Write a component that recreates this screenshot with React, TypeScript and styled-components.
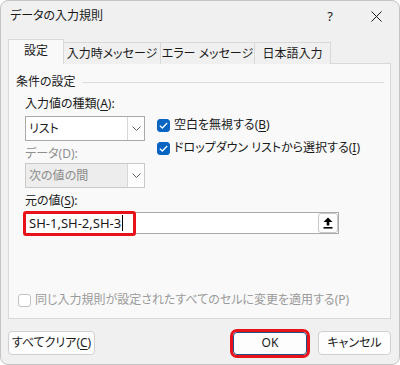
import React from "react";
import styled, { createGlobalStyle, css } from "styled-components";

const GlobalStyle = createGlobalStyle`
  html, body {
    margin: 0;
    background: #ffffff;
  }
  body {
    font-family: "Noto Sans", "Noto Sans CJK JP", sans-serif;
    font-size: 12px;
    color: #1a1a1a;
    font-feature-settings: "palt";
  }
`;

const Window = styled.div`
  width: 400px;
  height: 365px;
  box-sizing: border-box;
  border: 1px solid #c4c4c4;
  border-radius: 8px;
  background: #f0f0f0;
  overflow: hidden;
  display: flex;
  flex-direction: column;
`;

const TitleBar = styled.div`
  height: 30px;
  display: flex;
  align-items: center;
  padding-left: 9px;
  flex-shrink: 0;
`;

const Title = styled.div`
  flex: 1;
  font-size: 12px;
  line-height: 16px;
`;

const CaptionButton = styled.div`
  width: 46px;
  height: 30px;
  display: flex;
  align-items: center;
  justify-content: center;
  font-size: 13px;
  color: #1a1a1a;
`;

const Main = styled.div`
  padding: 8px 8px 0 7px;
  display: flex;
  flex-direction: column;
`;

const Tabs = styled.div`
  display: flex;
  align-items: flex-end;
  height: 25px;
  margin-bottom: -1px;
  position: relative;
  z-index: 1;
`;

const Tab = styled.div<{ $active?: boolean; $width: number }>`
  box-sizing: border-box;
  width: ${(p) => p.$width}px;
  height: 22px;
  margin-right: -1px;
  border: 1px solid #d9d9d9;
  border-bottom: none;
  background: #f0f0f0;
  display: flex;
  align-items: center;
  justify-content: center;
  line-height: 16px;
  white-space: nowrap;
  ${(p) =>
    p.$active &&
    css`
      height: 25px;
      background: #f9f9f9;
      padding-bottom: 2px;
    `}
`;

const Panel = styled.div`
  box-sizing: border-box;
  height: 256px;
  border: 1px solid #d9d9d9;
  background: #f9f9f9;
  padding: 10px 6px 0 7px;
  display: flex;
  flex-direction: column;
`;

const GroupHeader = styled.div`
  display: flex;
  align-items: center;
  gap: 6px;
  line-height: 16px;

  &::after {
    content: "";
    flex: 1;
    height: 1px;
    background: #dcdcdc;
    margin-top: 1px;
  }
`;

const GroupBody = styled.div`
  padding-left: 9px;
  display: flex;
  flex-direction: column;
`;

const FieldLabel = styled.div<{ $disabled?: boolean; $gap?: number }>`
  line-height: 16px;
  margin-top: ${(p) => p.$gap ?? 5}px;
  color: ${(p) => (p.$disabled ? "#8f8f8f" : "#1a1a1a")};
`;

const Row = styled.div`
  display: flex;
  margin-top: 4px;
`;

const LeftCol = styled.div`
  width: 120px;
  display: flex;
  flex-direction: column;
`;

const Options = styled.div`
  margin-left: 12px;
  display: flex;
  flex-direction: column;
  gap: 5px;
`;

const Select = styled.div<{ $disabled?: boolean; $gap?: number }>`
  box-sizing: border-box;
  height: 25px;
  margin-top: ${(p) => p.$gap ?? 0}px;
  border: 1px solid ${(p) => (p.$disabled ? "#c9c9c9" : "#a9a9a9")};
  background: ${(p) => (p.$disabled ? "#ededed" : "#ffffff")};
  color: ${(p) => (p.$disabled ? "#8c8c8c" : "#1a1a1a")};
  display: flex;
  align-items: center;
`;

const SelectValue = styled.div`
  flex: 1;
  padding-left: 3px;
  line-height: 16px;
`;

const SelectArrow = styled.div`
  box-sizing: border-box;
  width: 17px;
  height: 23px;
  border-left: 1px solid #d6d6d6;
  background: #fdfdfd;
  display: flex;
  align-items: center;
  justify-content: center;
`;

const CheckRow = styled.label<{ $disabled?: boolean }>`
  display: flex;
  align-items: center;
  gap: 4px;
  height: 18px;
  line-height: 16px;
  white-space: nowrap;
  color: ${(p) => (p.$disabled ? "#9a9a9a" : "#1a1a1a")};
`;

const Box = styled.span<{ $checked?: boolean }>`
  box-sizing: border-box;
  width: 13px;
  height: 13px;
  border-radius: 3px;
  display: inline-flex;
  align-items: center;
  justify-content: center;
  background: ${(p) => (p.$checked ? "#0a64c2" : "#ffffff")};
  border: 1px solid ${(p) => (p.$checked ? "#0a64c2" : "#c2c2c2")};
`;

const Key = styled.span`
  text-decoration: underline;
  text-underline-offset: 2px;
`;

const SourceField = styled.div`
  position: relative;
  box-sizing: border-box;
  width: 314px;
  height: 22px;
  margin-top: 3px;
  border: 1px solid #a9a9a9;
  background: #ffffff;
  display: flex;
  align-items: center;
`;

const SourceText = styled.div`
  flex: 1;
  padding-left: 3px;
  font-size: 13px;
  line-height: 16px;
  display: flex;
  align-items: center;
`;

const Caret = styled.span`
  display: inline-block;
  width: 1px;
  height: 16px;
  background: #000;
  margin-left: 1px;
`;

const Highlight = styled.div`
  position: absolute;
  left: -3px;
  top: -2px;
  width: 113px;
  height: 25px;
  box-sizing: border-box;
  border: 3px solid #e8121a;
  border-radius: 3px;
  pointer-events: none;
`;

const CollapseButton = styled.div`
  box-sizing: border-box;
  width: 20px;
  height: 20px;
  border: 1px solid #c8c8c8;
  border-radius: 3px;
  background: #fdfdfd;
  display: flex;
  align-items: center;
  justify-content: center;
`;

const Spacer = styled.div`
  flex: 1;
`;

const BottomCheck = styled.div`
  margin-left: 2px;
  margin-bottom: 9px;
`;

const Footer = styled.div`
  margin-top: 12px;
  display: flex;
  align-items: center;
`;

const Button = styled.div<{ $width: number; $primary?: boolean }>`
  box-sizing: border-box;
  width: ${(p) => p.$width}px;
  height: 24px;
  border: 1px solid #d0d0d0;
  border-radius: 4px;
  background: #fdfdfd;
  display: flex;
  align-items: center;
  justify-content: center;
  line-height: 16px;
  white-space: nowrap;
  ${(p) =>
    p.$primary &&
    css`
      height: 23px;
      border-color: #1f4f86;
      outline: 3px solid #e8121a;
      outline-offset: 0;
      margin-left: auto;
      margin-right: 11px;
    `}
`;

const Chevron = () => (
  <svg width="9" height="5" viewBox="0 0 9 5">
    <polyline points="0.5,0.5 4.5,4.5 8.5,0.5" fill="none" stroke="#5c5c5c" strokeWidth="1" />
  </svg>
);

const Tick = () => (
  <svg width="9" height="7" viewBox="0 0 9 7">
    <polyline points="0.8,3.6 3.3,6 8.2,1" fill="none" stroke="#ffffff" strokeWidth="1.3" />
  </svg>
);

export default function App() {
  return (
    <>
      <GlobalStyle />
      <Window>
        <TitleBar>
          <Title>データの入力規則</Title>
          <CaptionButton>?</CaptionButton>
          <CaptionButton>
            <svg width="11" height="11" viewBox="0 0 11 11">
              <path d="M0.5 0.5 L10.5 10.5 M10.5 0.5 L0.5 10.5" stroke="#1a1a1a" strokeWidth="1" />
            </svg>
          </CaptionButton>
        </TitleBar>

        <Main>
          <Tabs>
            <Tab $active $width={56}>設定</Tab>
            <Tab $width={98}>入力時メッセージ</Tab>
            <Tab $width={95}>エラー メッセージ</Tab>
            <Tab $width={77}>日本語入力</Tab>
          </Tabs>

          <Panel>
            <GroupHeader>条件の設定</GroupHeader>
            <GroupBody>
              <FieldLabel $gap={6}>
                入力値の種類(<Key>A</Key>):
              </FieldLabel>
              <Row>
                <LeftCol>
                  <Select>
                    <SelectValue>リスト</SelectValue>
                    <SelectArrow>
                      <Chevron />
                    </SelectArrow>
                  </Select>
                  <FieldLabel $disabled>データ(D):</FieldLabel>
                  <Select $disabled $gap={1}>
                    <SelectValue>次の値の間</SelectValue>
                    <SelectArrow>
                      <Chevron />
                    </SelectArrow>
                  </Select>
                </LeftCol>
                <Options>
                  <CheckRow>
                    <Box $checked>
                      <Tick />
                    </Box>
                    <span>
                      空白を無視する(<Key>B</Key>)
                    </span>
                  </CheckRow>
                  <CheckRow>
                    <Box $checked>
                      <Tick />
                    </Box>
                    <span>
                      ドロップダウン リストから選択する(<Key>I</Key>)
                    </span>
                  </CheckRow>
                </Options>
              </Row>
              <FieldLabel>
                元の値(<Key>S</Key>):
              </FieldLabel>
              <SourceField>
                <SourceText>
                  SH-1,SH-2,SH-3
                  <Caret />
                </SourceText>
                <CollapseButton>
                  <svg width="10" height="12" viewBox="0 0 10 12">
                    <path d="M5 0.5 L9.5 5 L6.3 5 L6.3 8.5 L3.7 8.5 L3.7 5 L0.5 5 Z" fill="#000" />
                    <rect x="0.5" y="10" width="9" height="1.6" fill="#000" />
                  </svg>
                </CollapseButton>
                <Highlight />
              </SourceField>
            </GroupBody>
            <Spacer />
            <BottomCheck>
              <CheckRow $disabled>
                <Box />
                <span>同じ入力規則が設定されたすべてのセルに変更を適用する(P)</span>
              </CheckRow>
            </BottomCheck>
          </Panel>

          <Footer>
            <Button $width={87}>
              <span>
                すべてクリア(<Key>C</Key>)
              </span>
            </Button>
            <Button $width={74} $primary>
              OK
            </Button>
            <Button $width={73}>キャンセル</Button>
          </Footer>
        </Main>
      </Window>
    </>
  );
}
